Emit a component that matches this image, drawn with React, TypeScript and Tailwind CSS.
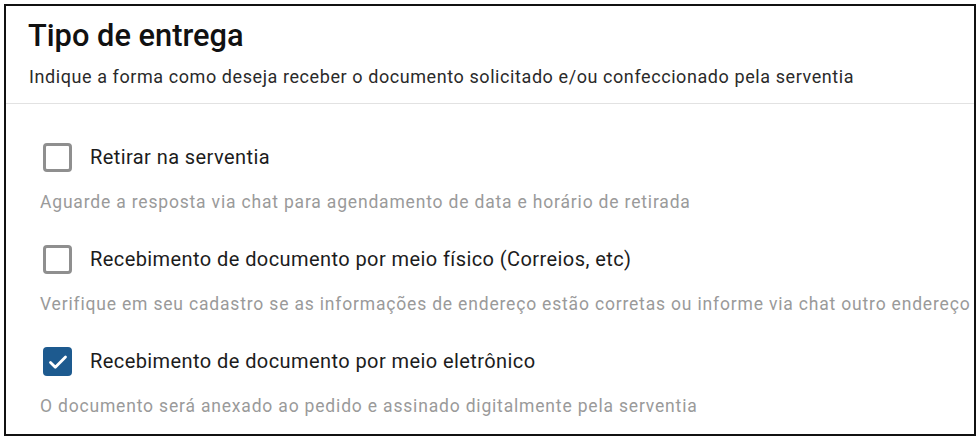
import React from 'react'

interface Option {
  label: string
  helper: string
  checked: boolean
}

const options: Option[] = [
  {
    label: 'Retirar na serventia',
    helper: 'Aguarde a resposta via chat para agendamento de data e horário de retirada',
    checked: false,
  },
  {
    label: 'Recebimento de documento por meio físico (Correios, etc)',
    helper:
      'Verifique em seu cadastro se as informações de endereço estão corretas ou informe via chat outro endereço',
    checked: false,
  },
  {
    label: 'Recebimento de documento por meio eletrônico',
    helper: 'O documento será anexado ao pedido e assinado digitalmente pela serventia',
    checked: true,
  },
]

const CheckBox: React.FC<{ checked: boolean }> = ( { checked } ) => {
  if ( checked ) {
    return (
      <span className="flex h-[29px] w-[29px] shrink-0 items-center justify-center rounded-[4px] bg-[#1d5a8f]">
        <svg width="24"
          height="24"
          viewBox="0 0 24 24"
          fill="none"
        >
          <path d="M4.5 12.5l4.8 4.8L19.5 7"
            stroke="white"
            strokeWidth="2.8"
            strokeLinecap="round"
            strokeLinejoin="round"
          />
        </svg>
      </span>
    )
  }
  return (
    <span className="h-[29px] w-[29px] shrink-0 rounded-[4px] border-[3px] border-[#8f8f8f] bg-white" />
  )
}

const App: React.FC = () => {
  return (
    <div className="h-[439px] w-[979px] bg-white p-1 font-['Roboto',sans-serif]">
      <div className="h-[432px] w-[972px] overflow-hidden border-2 border-[#111]">
        <div className="px-[22px] pt-[12px] pb-[14px]">
          <h1 className="text-[30.8px] leading-[36px] font-medium text-[#111]">Tipo de entrega</h1>
          <p className="mt-[11px] pl-[1px] text-[18px] leading-[24px] tracking-[0.58px] text-[#2a2a2a]">
            Indique a forma como deseja receber o documento solicitado e/ou confeccionado pela serventia
          </p>
        </div>
        <div className="h-px bg-[#e2e2e2]" />
        <ul className="pt-[39px] pl-[37px]">
          {options.map( ( option ) => (
            <li key={option.label}
              className="mb-[31px]"
            >
              <div className="flex items-center gap-[18px]">
                <CheckBox checked={option.checked} />
                <span className="text-[20px] leading-[29px] tracking-[0.42px] text-[#1c1c1c]">{option.label}</span>
              </div>
              <p className="mt-[18px] -ml-[3px] whitespace-nowrap text-[17.5px] leading-[24px] tracking-[0.82px] text-[#9a9a9a]">
                {option.helper}
              </p>
            </li>
          ) )}
        </ul>
      </div>
    </div>
  )
}

export default App
